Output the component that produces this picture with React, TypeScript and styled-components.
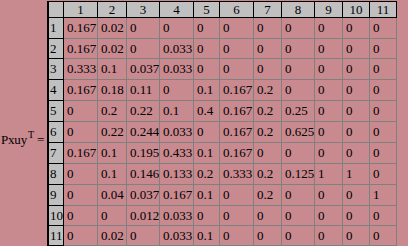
import React from "react";
import styled, { createGlobalStyle } from "styled-components";

const GlobalStyle = createGlobalStyle`
    html, body {
        margin: 0;
        padding: 0;
        background: #c8898f;
    }
    body {
        font-family: "Liberation Serif", "Times New Roman", serif;
        font-size: 13px;
        color: #000;
    }
`;

const colWidths = [15, 34, 29, 33, 34, 26, 34, 28, 33, 28, 27, 27];
const rowHeights = [16, 21, 20, 21, 21, 21, 21, 21, 21, 21, 20, 20];

const data: string[][] = [
    ["0.167", "0.02", "0", "0", "0", "0", "0", "0", "0", "0", "0"],
    ["0.167", "0.02", "0", "0.033", "0", "0", "0", "0", "0", "0", "0"],
    ["0.333", "0.1", "0.037", "0.033", "0", "0", "0", "0", "0", "0", "0"],
    ["0.167", "0.18", "0.11", "0", "0.1", "0.167", "0.2", "0", "0", "0", "0"],
    ["0", "0.2", "0.22", "0.1", "0.4", "0.167", "0.2", "0.25", "0", "0", "0"],
    ["0", "0.22", "0.244", "0.033", "0", "0.167", "0.2", "0.625", "0", "0", "0"],
    ["0.167", "0.1", "0.195", "0.433", "0.1", "0.167", "0", "0", "0", "0", "0"],
    ["0", "0.1", "0.146", "0.133", "0.2", "0.333", "0.2", "0.125", "1", "1", "0"],
    ["0", "0.04", "0.037", "0.167", "0.1", "0", "0.2", "0", "0", "0", "1"],
    ["0", "0", "0.012", "0.033", "0", "0", "0", "0", "0", "0", "0"],
    ["0", "0.02", "0", "0.033", "0.1", "0", "0", "0", "0", "0", "0"],
];

const Page = styled.div`
    display: flex;
    align-items: center;
    padding-top: 1px;
`;

// label sits on the baseline of the middle row, not the table centre
const Label = styled.div`
    width: 46px;
    padding-left: 1px;
    margin-top: 28px;
    white-space: nowrap;
    line-height: 15px;
    letter-spacing: -0.2px;

    sup {
        font-size: 10px;
        position: relative;
        top: -1px;
        margin-left: 1px;
    }
`;

const Grid = styled.div`
    display: grid;
    grid-template-columns: ${colWidths.map((w) => `${w}px`).join(" ")};
    grid-template-rows: ${rowHeights.map((h) => `${h}px`).join(" ")};
    border-top: 1px solid #000;
    border-left: 2px solid #000;
`;

const Cell = styled.div<{ $head?: boolean; $center?: boolean }>`
    box-sizing: border-box;
    display: flex;
    align-items: center;
    justify-content: ${(p) => (p.$center ? "center" : "flex-start")};
    padding-left: ${(p) => (p.$head ? (p.$center ? "0" : "1px") : "3px")};
    background: ${(p) => (p.$head ? "#c0c0c0" : "transparent")};
    border-right: 1px solid ${(p) => (p.$head ? "#000" : "#808080")};
    border-bottom: 1px solid ${(p) => (p.$head ? "#000" : "#808080")};
    white-space: nowrap;
    overflow: hidden;
`;

export default function App() {
    return (
        <>
            <GlobalStyle />
            <Page>
                <Label>
                    Pxuy<sup>T</sup> =
                </Label>
                <Grid>
                    <Cell $head />
                    {data[0].map((_, c) => (
                        <Cell key={`h${c}`} $head $center>
                            {c + 1}
                        </Cell>
                    ))}
                    {data.map((row, r) => (
                        <React.Fragment key={r}>
                            <Cell $head>{r + 1}</Cell>
                            {row.map((v, c) => (
                                <Cell key={c}>{v}</Cell>
                            ))}
                        </React.Fragment>
                    ))}
                </Grid>
            </Page>
        </>
    );
}
